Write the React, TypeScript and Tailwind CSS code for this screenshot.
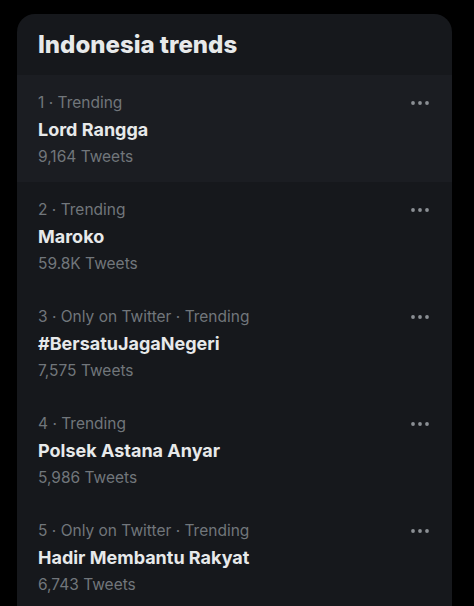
import React from 'react';

type Trend = {
  rank: number;
  meta: string;
  title: string;
  count: string;
};

const trends: Trend[] = [
  { rank: 1, meta: 'Trending', title: 'Lord Rangga', count: '9,164 Tweets' },
  { rank: 2, meta: 'Trending', title: 'Maroko', count: '59.8K Tweets' },
  { rank: 3, meta: 'Only on Twitter · Trending', title: '#BersatuJagaNegeri', count: '7,575 Tweets' },
  { rank: 4, meta: 'Trending', title: 'Polsek Astana Anyar', count: '5,986 Tweets' },
  { rank: 5, meta: 'Only on Twitter · Trending', title: 'Hadir Membantu Rakyat', count: '6,743 Tweets' },
];

function MoreIcon() {
  return (
    <svg width="22" height="22" viewBox="0 0 22 22" fill="#8b8f94">
      <circle cx="4" cy="11" r="1.9" />
      <circle cx="11" cy="11" r="1.9" />
      <circle cx="18" cy="11" r="1.9" />
    </svg>
  );
}

function TrendRow({ trend, active }: { trend: Trend; active?: boolean }) {
  return (
    <div className={`flex h-[107px] items-start justify-between pl-[21px] pr-[21px] pt-[18px] ${active ? 'bg-[#1b1d22]' : ''}`}>
      <div className="flex flex-col">
        <div className="h-[20px] text-[15.5px] leading-[20px] text-[#71767b]">
          {trend.rank} · {trend.meta}
        </div>
        <div className="mt-[5px] h-[24px] text-[18px] font-bold leading-[24px] text-[#e7e9ea]">
          {trend.title}
        </div>
        <div className="mt-[5px] h-[20px] text-[15.5px] leading-[20px] text-[#71767b]">
          {trend.count}
        </div>
      </div>
      <div className="-mt-[1px]">
        <MoreIcon />
      </div>
    </div>
  );
}

export default function App() {
  return (
    <div className="h-[606px] w-[474px] overflow-hidden bg-black pt-[14px] font-['Inter','Noto_Sans',sans-serif]">
      <div className="ml-[17px] h-[620px] w-[435px] overflow-hidden rounded-t-[18px] bg-[#16181c]">
        <div className="flex h-[61px] items-center pl-[21px] pt-[1px]">
          <h1 className="text-[24px] font-extrabold leading-[30px] text-[#e7e9ea]">Indonesia trends</h1>
        </div>
        {trends.map((t, i) => (
          <TrendRow key={t.rank} trend={t} active={i === 0} />
        ))}
      </div>
    </div>
  );
}
